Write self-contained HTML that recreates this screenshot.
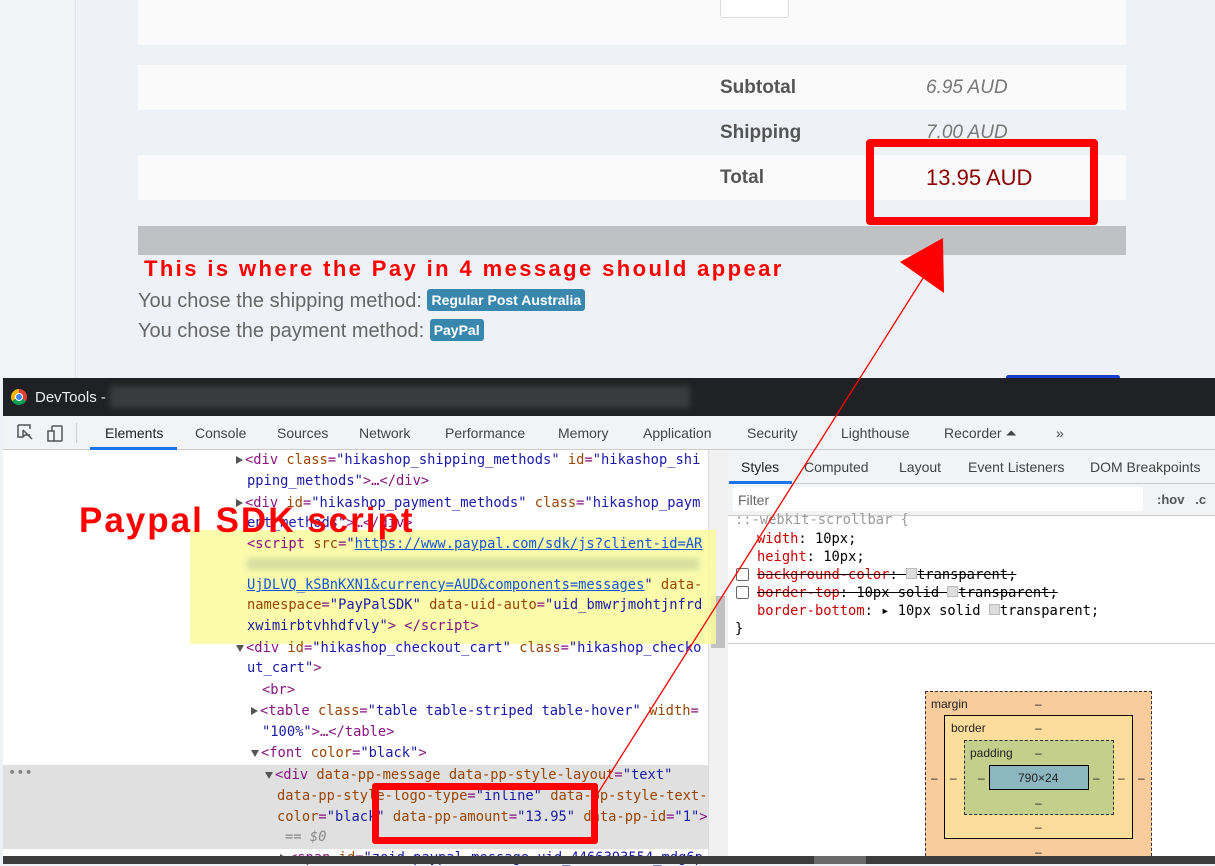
<!DOCTYPE html>
<html><head><meta charset="utf-8"><style>
*{margin:0;padding:0;box-sizing:border-box}
body{width:1215px;height:864px;overflow:hidden;position:relative;background:#eef2f6;font-family:"Liberation Sans",sans-serif}
.a{position:absolute}
.mono{font-family:"DejaVu Sans Mono","Liberation Mono",monospace;font-size:13.75px;white-space:nowrap}
.tag{color:#881280}.at{color:#994500}.v{color:#1a1aa6}
.code div{position:absolute;white-space:nowrap}
.tri{display:inline-block;width:0;height:0;border-left:7px solid #555;border-top:4px solid transparent;border-bottom:4px solid transparent;margin-right:2px}
.trd{display:inline-block;width:0;height:0;border-top:7px solid #555;border-left:4px solid transparent;border-right:4px solid transparent;margin-right:2px}
.tabs span{position:absolute;top:0;font-size:14px;color:#444}
</style></head><body>
<div class="a" style="left:0;top:0;width:76px;height:378px;background:#f1f4f7;border-right:1px solid #e2e6ea"></div>
<div class="a" style="left:138px;top:0;width:988px;height:45px;background:#fafafa"></div>
<div class="a" style="left:720px;top:-4px;width:69px;height:22px;background:#fff;border:1px solid #ddd;border-radius:3px"></div>
<div class="a" style="left:138px;top:65px;width:988px;height:45px;background:#fafafa"></div>
<div class="a" style="left:138px;top:155px;width:988px;height:45px;background:#fafafa"></div>
<div class="a" style="left:720px;top:77px;font-size:19px;font-weight:bold;color:#555">Subtotal</div>
<div class="a" style="left:926px;top:77px;font-size:19px;font-style:italic;color:#777">6.95 AUD</div>
<div class="a" style="left:720px;top:122px;font-size:19px;font-weight:bold;color:#555">Shipping</div>
<div class="a" style="left:926px;top:122px;font-size:19px;font-style:italic;color:#777">7.00 AUD</div>
<div class="a" style="left:720px;top:167px;font-size:19px;font-weight:bold;color:#555">Total</div>
<div class="a" style="left:926px;top:165px;font-size:22px;color:#8b0000">13.95 AUD</div>
<div class="a" style="left:138px;top:226px;width:988px;height:29px;background:#c0c1c5"></div>
<div class="a" style="left:866px;top:139px;width:232px;height:86px;border:8px solid #f00;border-radius:4px"></div>
<div class="a" style="left:144px;top:256px;font-size:22px;font-weight:bold;color:#f00;letter-spacing:2.4px">This is where the Pay in 4 message should appear</div>
<div class="a" style="left:138px;top:290px;font-size:20px;color:#666">You chose the shipping method: <span style="background:#3a87ad;color:#fff;font-size:14px;font-weight:bold;padding:3px 4px;border-radius:3px;vertical-align:2px">Regular Post Australia</span></div>
<div class="a" style="left:138px;top:320px;font-size:20px;color:#666">You chose the payment method: <span style="background:#3a87ad;color:#fff;font-size:14px;font-weight:bold;padding:3px 4px;border-radius:3px;vertical-align:2px">PayPal</span></div>
<div class="a" style="left:1006px;top:375px;width:114px;height:5px;background:#1a3fd0;border-radius:3px"></div>

<div class="a" style="left:3px;top:378px;width:1212px;height:486px;background:#fff"></div>
<div class="a" style="left:3px;top:378px;width:1212px;height:38px;background:#202124"></div>
<div class="a" style="left:11px;top:389px;width:16px;height:16px;border-radius:50%;background:conic-gradient(#db4437 0 120deg,#0f9d58 120deg 240deg,#f4b400 240deg);"></div>
<div class="a" style="left:15px;top:393px;width:8px;height:8px;border-radius:50%;background:#4285f4;border:1px solid #fff"></div>
<div class="a" style="left:35px;top:389px;font-size:15px;color:#eee">DevTools -</div>
<div class="a" style="left:110px;top:386px;width:580px;height:22px;background:#3a3b3d;filter:blur(3px)"></div>
<div class="a" style="left:3px;top:416px;width:1212px;height:34px;background:#f1f3f4;border-bottom:1px solid #ccc"></div>
<svg class="a" style="left:16px;top:423px" width="56" height="20"><path d="M2 2h12v4M2 2v12h4M7 7l9 9M7 7v7l2-2h5" fill="none" stroke="#555" stroke-width="1.5"/><rect x="36" y="3" width="10" height="15" rx="1" fill="none" stroke="#555" stroke-width="1.5"/><rect x="32" y="8" width="6" height="10" fill="#f1f3f4" stroke="#555" stroke-width="1.5"/></svg>
<div class="a" style="left:76px;top:423px;width:1px;height:20px;background:#ccc"></div>
<div class="a tabs" style="left:0;top:425px;width:1215px;height:20px">
<span style="left:105px;color:#222">Elements</span><span style="left:195px">Console</span><span style="left:277px">Sources</span><span style="left:359px">Network</span><span style="left:445px">Performance</span><span style="left:558px">Memory</span><span style="left:643px">Application</span><span style="left:747px">Security</span><span style="left:841px">Lighthouse</span><span style="left:944px">Recorder ⏶</span><span style="left:1056px">»</span></div>
<div class="a" style="left:90px;top:447px;width:87px;height:3px;background:#1a73e8"></div>
<div class="a" style="left:708px;top:450px;width:20px;height:406px;background:#f1f1f1;border-left:1px solid #ddd"></div>
<div class="a" style="left:711px;top:596px;width:14px;height:52px;background:#c1c1c1"></div>
<div class="a" style="left:190px;top:530px;width:526px;height:114px;background:#fafa9e;opacity:.85"></div>
<div class="a" style="left:3px;top:765px;width:705px;height:84px;background:#e0e0e0"></div>
<div class="a mono code" style="left:0;top:0">
<div style="left:236px;top:452px"><span class="tri"></span><span class="tag">&lt;div </span><span class="at">class</span><span class="tag">=</span><span class="v">"hikashop_shipping_methods"</span> <span class="at">id</span><span class="tag">=</span><span class="v">"hikashop_shi</span></div>
<div style="left:247px;top:473px"><span class="v">pping_methods"</span><span class="tag">&gt;…&lt;/div&gt;</span></div>
<div style="left:236px;top:495px"><span class="tri"></span><span class="tag">&lt;div </span><span class="at">id</span><span class="tag">=</span><span class="v">"hikashop_payment_methods"</span> <span class="at">class</span><span class="tag">=</span><span class="v">"hikashop_paym</span></div>
<div style="left:247px;top:515px"><span class="v">ent_methods"</span><span class="tag">&gt;…&lt;/div&gt;</span></div>
<div style="left:247px;top:536px"><span class="tag">&lt;script </span><span class="at">src</span><span class="tag">=</span><span class="v">"</span><span style="color:#1558d6;text-decoration:underline">https://www.paypal.com/sdk/js?client-id=AR</span></div>
<div style="left:247px;top:558px;width:452px;height:12px;background:#d4dfa0;filter:blur(3px)"></div>
<div style="left:247px;top:577px"><span style="color:#1558d6;text-decoration:underline">UjDLVQ_kSBnKXN1&amp;currency=AUD&amp;components=messages</span><span class="v">"</span> <span class="at">data-</span></div>
<div style="left:247px;top:597px"><span class="at">namespace</span><span class="tag">=</span><span class="v">"PayPalSDK"</span> <span class="at">data-uid-auto</span><span class="tag">=</span><span class="v">"uid_bmwrjmohtjnfrd</span></div>
<div style="left:247px;top:618px"><span class="v">xwimirbtvhhdfvly"</span><span class="tag">&gt; &lt;/script&gt;</span></div>
<div style="left:236px;top:640px"><span class="trd"></span><span class="tag">&lt;div </span><span class="at">id</span><span class="tag">=</span><span class="v">"hikashop_checkout_cart"</span> <span class="at">class</span><span class="tag">=</span><span class="v">"hikashop_checko</span></div>
<div style="left:247px;top:660px"><span class="v">ut_cart"</span><span class="tag">&gt;</span></div>
<div style="left:262px;top:682px"><span class="tag">&lt;br&gt;</span></div>
<div style="left:251px;top:703px"><span class="tri"></span><span class="tag">&lt;table </span><span class="at">class</span><span class="tag">=</span><span class="v">"table table-striped table-hover"</span> <span class="at">width</span><span class="tag">=</span></div>
<div style="left:262px;top:724px"><span class="v">"100%"</span><span class="tag">&gt;…&lt;/table&gt;</span></div>
<div style="left:251px;top:745px"><span class="trd"></span><span class="tag">&lt;font </span><span class="at">color</span><span class="tag">=</span><span class="v">"black"</span><span class="tag">&gt;</span></div>
<div style="left:8px;top:765px;color:#888">•••</div>
<div style="left:265px;top:767px"><span class="trd"></span><span class="tag">&lt;div </span><span class="at">data-pp-message data-pp-style-layout</span><span class="tag">=</span><span class="v">"text"</span></div>
<div style="left:277px;top:788px"><span class="at">data-pp-style-logo-type</span><span class="tag">=</span><span class="v">"inline"</span> <span class="at">data-pp-style-text-</span></div>
<div style="left:277px;top:809px"><span class="at">color</span><span class="tag">=</span><span class="v">"black"</span> <span class="at">data-pp-amount</span><span class="tag">=</span><span class="v">"13.95"</span> <span class="at">data-pp-id</span><span class="tag">=</span><span class="v">"1"</span><span class="tag">&gt;</span></div>
<div style="left:285px;top:829px;color:#888;font-style:italic">== $0</div>
<div style="left:280px;top:850px"><span class="tri"></span><span class="tag">&lt;span </span><span class="at">id</span><span class="tag">=</span><span class="v">"zoid-paypal-message-uid_4466393554_mdg6p</span></div>
</div>
<div class="a" style="left:79px;top:501px;font-size:35px;font-weight:bold;color:#f00;letter-spacing:2px">Paypal SDK script</div>
<div class="a" style="left:372px;top:783px;width:226px;height:61px;border:7px solid #f00;border-radius:3px"></div>
<div class="a" style="left:728px;top:450px;width:487px;height:34px;background:#f1f3f4;border-bottom:1px solid #ccc"></div>
<div class="a tabs" style="left:0;top:459px;width:1215px;height:20px">
<span style="left:741px;color:#222">Styles</span><span style="left:804px">Computed</span><span style="left:899px">Layout</span><span style="left:968px">Event Listeners</span><span style="left:1090px">DOM Breakpoints</span></div>
<div class="a" style="left:729px;top:481px;width:63px;height:3px;background:#1a73e8"></div>
<div class="a" style="left:728px;top:484px;width:487px;height:32px;background:#f1f3f4;border-bottom:1px solid #ccc"></div>
<div class="a" style="left:733px;top:487px;width:410px;height:24px;background:#fff"></div>
<div class="a" style="left:738px;top:492px;font-size:14px;color:#666">Filter</div>
<div class="a" style="left:1157px;top:492px;font-size:13px;font-weight:bold;color:#555">:hov&nbsp;&nbsp; .c</div>
<div class="a mono code" style="left:0;top:0">
<div style="left:735px;top:512px;color:#999">::-webkit-scrollbar {</div>
<div style="left:757px;top:531px"><span style="color:#c80000">width</span>: 10px;</div>
<div style="left:757px;top:549px"><span style="color:#c80000">height</span>: 10px;</div>
<div style="left:757px;top:567px;text-decoration:line-through"><span style="color:#c80000">background-color</span>: <span style="display:inline-block;width:11px;height:11px;background:#ddd;border:1px solid #bbb"></span>transparent;</div>
<div style="left:757px;top:585px;text-decoration:line-through"><span style="color:#c80000">border-top</span>: 10px solid <span style="display:inline-block;width:11px;height:11px;background:#ddd;border:1px solid #bbb"></span>transparent;</div>
<div style="left:757px;top:603px"><span style="color:#c80000">border-bottom</span>: ▸ 10px solid <span style="display:inline-block;width:11px;height:11px;background:#ddd;border:1px solid #bbb"></span>transparent;</div>
<div style="left:735px;top:621px">}</div>
</div>
<div class="a" style="left:736px;top:568px;width:13px;height:13px;border:1px solid #666;border-radius:2px"></div>
<div class="a" style="left:736px;top:586px;width:13px;height:13px;border:1px solid #666;border-radius:2px"></div>
<div class="a" style="left:728px;top:643px;width:487px;height:1px;background:#ccc"></div>
<div class="a" style="left:925px;top:691px;width:227px;height:170px;background:#f9cc9d;border:1px dashed #333"></div>
<div class="a" style="left:944px;top:715px;width:189px;height:124px;background:#fddd9b;border:1px solid #000"></div>
<div class="a" style="left:964px;top:740px;width:150px;height:75px;background:#c3cf8a;border:1px dashed #333"></div>
<div class="a" style="left:989px;top:765px;width:100px;height:25px;background:#8cb6c0;border:1px solid #000"></div>
<div class="a" style="font-size:12px;color:#222;left:0;top:0">
<div class="a" style="left:931px;top:697px">margin</div><div class="a" style="left:1035px;top:697px">–</div>
<div class="a" style="left:951px;top:721px">border</div><div class="a" style="left:1035px;top:721px">–</div>
<div class="a" style="left:970px;top:746px">padding</div><div class="a" style="left:1035px;top:746px">–</div>
<div class="a" style="left:1018px;top:771px">790×24</div>
<div class="a" style="left:931px;top:771px">–</div><div class="a" style="left:950px;top:771px">–</div><div class="a" style="left:978px;top:771px">–</div>
<div class="a" style="left:1093px;top:771px">–</div><div class="a" style="left:1118px;top:771px">–</div><div class="a" style="left:1138px;top:771px">–</div>
<div class="a" style="left:1035px;top:796px">–</div><div class="a" style="left:1035px;top:820px">–</div><div class="a" style="left:1035px;top:845px">–</div>
</div>
<div class="a" style="left:3px;top:856px;width:1212px;height:8px;background:#3c3c3c"></div>
<div class="a" style="left:814px;top:856px;width:52px;height:8px;background:#6a6a6a"></div>
<svg class="a" style="left:0;top:0" width="1215" height="864"><line x1="598" y1="793" x2="925" y2="275" stroke="#f00" stroke-width="1.3"/><polygon points="943,238 944,293 900,262" fill="#f00"/></svg>
</body></html>
